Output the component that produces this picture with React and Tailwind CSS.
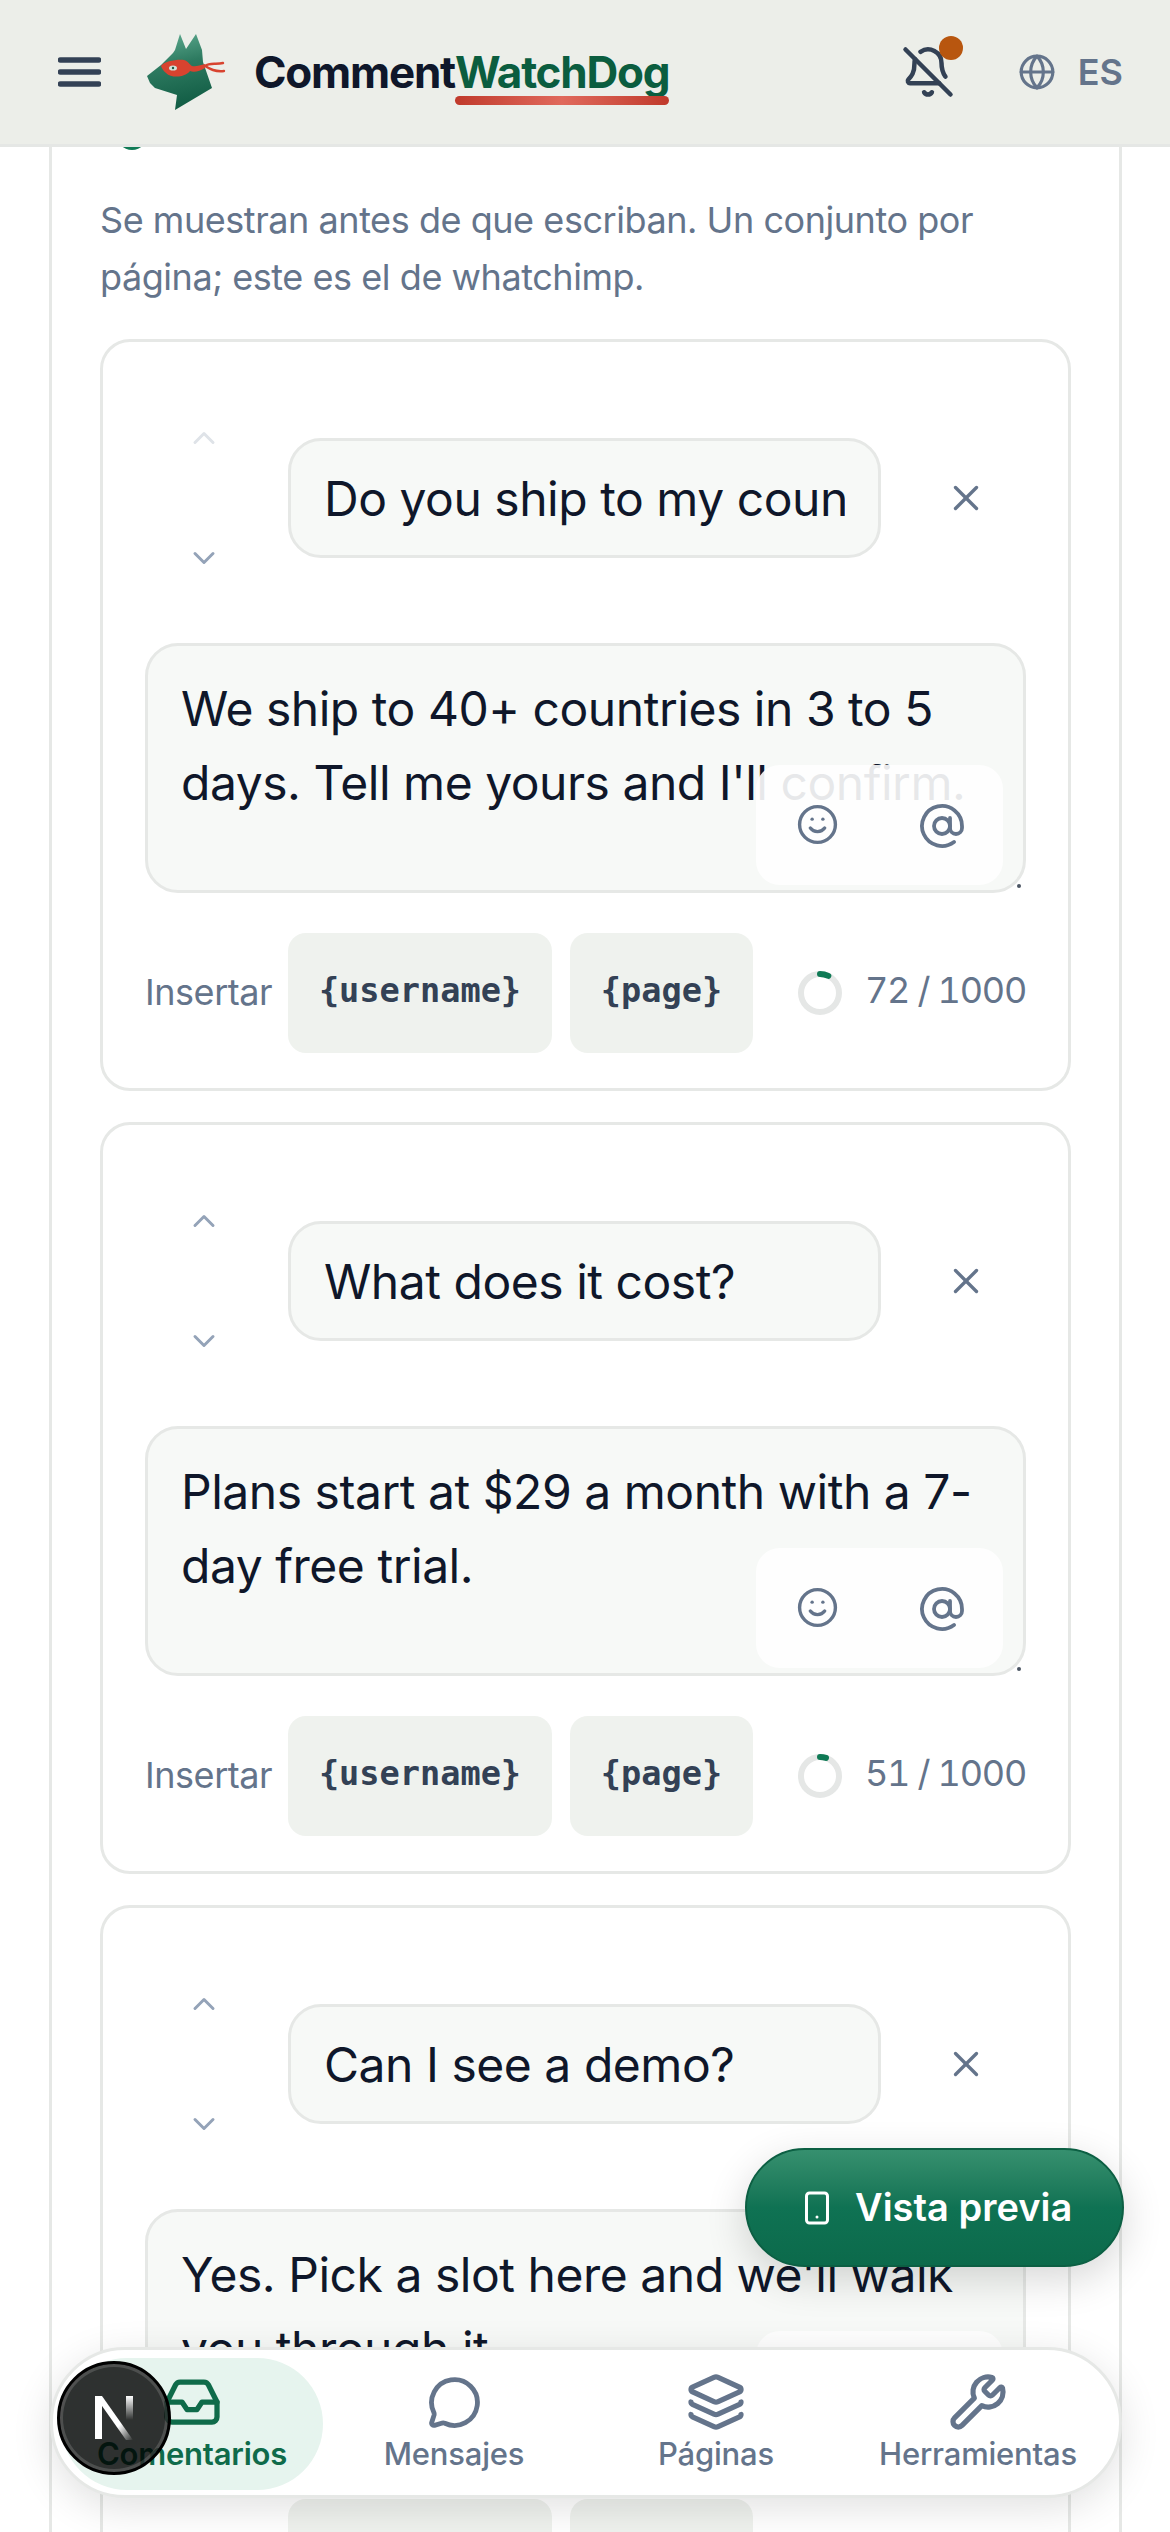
import React from "react";
import { AtSign, BellOff, ChevronDown, ChevronUp, Globe, Inbox, Layers, MessageCircle, Smartphone, Smile, Wrench, X } from "lucide-react";

function Logo() {
  return (
    <svg width="84" height="80" viewBox="16 12 84 80" className="shrink-0">
      <defs>
        <linearGradient id="dog" x1="0.35" y1="0" x2="0.55" y2="1">
          <stop offset="0" stopColor="#5aa78c" />
          <stop offset="0.4" stopColor="#2d7a60" />
          <stop offset="1" stopColor="#0f5a42" />
        </linearGradient>
      </defs>
      <path d="M17 56 L31 45 L43 33 L45 30 L50 14 L56 29 L66 14 L72 30 L73 42 L82 68 L45 90 L47 75 L25 68 L20 63 Z" fill="url(#dog)" />
      <path d="M31 46 C34 41 48 39 54 40 C58 41 60 45 62 46 C66 47 70 45 75 44 L75 48 C70 51 64 53 60 51 C56 57 42 59 36 53 C33 51 32 48 31 46 Z" fill="#d8432f" />
      <ellipse cx="43" cy="48" rx="4" ry="2.6" fill="#cfe3d9" />
      <circle cx="43" cy="48" r="1.2" fill="#1c5a45" />
      <path d="M75 46 C80 42 86 45 93 43 M75 46 C80 49 85 52 94 51" fill="none" stroke="#d8432f" strokeWidth="2.4" strokeLinecap="round" />
    </svg>
  );
}

function Ring({ value }) {
  const c = 2 * Math.PI * 19;
  return (
    <svg width="44" height="44" viewBox="0 0 44 44" className="-rotate-90 shrink-0">
      <circle cx="22" cy="22" r="19" fill="none" stroke="#e5e7e6" strokeWidth="6" />
      <circle cx="22" cy="22" r="19" fill="none" stroke="#0f7a55" strokeWidth="6" strokeLinecap="round" strokeDasharray={`${(value / 1000) * c} ${c}`} />
    </svg>
  );
}

function Card({ question, answer, count, upMuted }) {
  return (
    <div className="rounded-[30px] border-[3px] border-[#e6e8e6] bg-white px-[42px] pt-[78px] pb-[35px]">
      <div className="flex h-[156px] items-center gap-[25px]">
        <div className="flex h-full w-[118px] shrink-0 flex-col items-center justify-between">
          <ChevronUp size={36} strokeWidth={2} className={upMuted ? "text-[#dfe3e8]" : "text-[#94a3b8]"} />
          <ChevronDown size={36} strokeWidth={2} className="text-[#94a3b8]" />
        </div>
        <input
          readOnly
          defaultValue={question}
          className="h-[120px] w-[593px] shrink-0 rounded-[33px] border-[3px] border-[#e6e8e6] bg-[#f7f9f7] px-[33px] text-[48px] tracking-[-0.47px] text-[#0f172a] outline-none"
        />
        <div className="flex w-[120px] shrink-0 items-center justify-center">
          <X size={42} strokeWidth={1.9} className="text-[#64748b]" />
        </div>
      </div>
      <div className="relative mt-[67px] h-[250px]">
        <textarea
          readOnly
          defaultValue={answer}
          className="block h-full w-full resize-none overflow-hidden rounded-[33px] border-[3px] border-[#e6e8e6] bg-[#f7f9f7] px-[33px] pt-[26px] text-[48px] leading-[74px] tracking-[-0.47px] text-[#0f172a] outline-none"
        />
        <div className="absolute right-[23px] bottom-[8px] flex h-[120px] w-[247px] items-start rounded-[24px] bg-white/90 pt-[37px]">
          <div className="flex w-[124px] justify-center">
            <Smile size={43} strokeWidth={1.9} className="mt-[1px] text-[#64748b]" />
          </div>
          <div className="flex w-[124px] justify-center pl-[2px]">
            <AtSign size={48} strokeWidth={1.9} className="text-[#64748b]" />
          </div>
        </div>
        <div className="absolute right-[5px] bottom-[5px] h-[4px] w-[4px] rounded-full bg-[#4b5563]" />
      </div>
      <div className="mt-[40px] flex h-[120px] items-center">
        <span className="w-[143px] shrink-0 pb-[2px] text-[36px] tracking-[-0.45px] text-[#64748b]">Insertar</span>
        <div className="flex gap-[18px] font-['DejaVu_Sans_Mono',monospace] text-[33.6px] font-bold text-[#334155]">
          <span className="flex h-[120px] w-[264px] items-center justify-center rounded-[18px] bg-[#eff2ee] pb-[3px]">{"{username}"}</span>
          <span className="flex h-[120px] w-[183px] items-center justify-center rounded-[18px] bg-[#eff2ee] pb-[3px]">{"{page}"}</span>
        </div>
        <div className="ml-auto flex items-center gap-[23px]">
          <Ring value={count} />
          <span className="pb-[6px] text-[36px] tracking-[-1.25px] whitespace-nowrap text-[#64748b] tabular-nums">{count} / 1000</span>
        </div>
      </div>
    </div>
  );
}

function Tab({ icon: Icon, label, active, size = 60 }) {
  return (
    <div className={`flex h-[132px] flex-col items-center justify-start rounded-[66px] pt-[14px] ${active ? "bg-[#e6f4ee] text-[#0f6b4a]" : "text-[#64748b]"}`}>
      <span className="flex h-[60px] items-center justify-center">
        <Icon size={size} strokeWidth={2.1} />
      </span>
      <span className={`mt-[2px] text-[31px] leading-[40px] tracking-[-0.2px] whitespace-nowrap ${active ? "font-semibold" : "font-medium"}`}>{label}</span>
    </div>
  );
}

export default function App() {
  return (
    <div className="relative h-[2532px] w-[1170px] overflow-hidden bg-white font-['Inter',sans-serif]">
      <header className="relative z-10 flex h-[147px] items-center border-b-[3px] border-[#e5e7e5] bg-[#eceee9] pr-[47px] pl-[58px]">
        <svg width="43" height="30" viewBox="0 0 43 30" className="shrink-0 text-[#334155]">
          <path d="M2.5 3 H40.5 M2.5 15 H40.5 M2.5 27 H40.5" stroke="currentColor" strokeWidth="5.5" strokeLinecap="round" fill="none" />
        </svg>
        <div className="ml-[45px] flex items-center">
          <Logo />
          <div className="relative ml-[24px] flex text-[44px] leading-[52px] font-bold tracking-[-0.028em]">
            <span className="text-[#0f172a]">Comment</span>
            <span className="relative text-[#0b5d3f]">
              WatchDog
              <span className="absolute top-[50px] right-0 left-0 h-[9px] rounded-full bg-gradient-to-r from-[#c0392b] via-[#e0695c] to-[#c0392b]" />
            </span>
          </div>
        </div>
        <div className="relative ml-auto">
          <BellOff size={54} strokeWidth={2} className="text-[#334155]" />
          <span className="absolute -top-[9px] -right-[8px] h-[24px] w-[24px] rounded-full bg-[#b8560f]" />
        </div>
        <div className="ml-[63px] flex items-center gap-[22px] text-[36px] font-semibold text-[#64748b]">
          <Globe size={38} strokeWidth={2} />
          <span>ES</span>
        </div>
      </header>

      <main className="pr-[48px] pl-[49px]">
        <section className="-mt-[29px] border-x-[3px] border-[#e6e8e6] bg-white px-[48px]">
          <div className="ml-[16px] h-[32px] w-[32px] rounded-full bg-[#0f7a55]" />
          <p className="mt-[42px] mb-[33px] text-[36px] leading-[57px] tracking-[-0.45px] text-[#64748b]">
            Se muestran antes de que escriban. Un conjunto por página; este es el de whatchimp.
          </p>
          <div className="flex flex-col gap-[31px]">
            <Card question="Do you ship to my country?" answer="We ship to 40+ countries in 3 to 5 days. Tell me yours and I'll confirm." count={72} upMuted />
            <Card question="What does it cost?" answer="Plans start at $29 a month with a 7-day free trial." count={51} />
            <Card question="Can I see a demo?" answer="Yes. Pick a slot here and we'll walk you through it." count={52} />
          </div>
        </section>
      </main>

      <button className="absolute top-[2148px] left-[745px] flex h-[119px] w-[379px] items-center justify-start gap-[20px] rounded-full border-[2px] border-[#0c5f43] bg-gradient-to-b from-[#36906f] via-[#0f7253] to-[#0c6a4b] pl-[52px] text-[38px] font-semibold text-white shadow-[0_12px_40px_rgba(0,0,0,0.16)]">
        <Smartphone size={36} strokeWidth={2} />
        <span>Vista previa</span>
      </button>

      <nav className="absolute top-[2347px] left-[50px] grid h-[151px] w-[1072px] grid-cols-[repeat(4,262px)] rounded-[75px] border-[3px] border-[#e6e8e6] bg-white px-[8px] py-[8px] shadow-[0_10px_40px_rgba(0,0,0,0.12)]">
        <Tab icon={Inbox} label="Comentarios" active />
        <Tab icon={MessageCircle} label="Mensajes" size={55} />
        <Tab icon={Layers} label="Páginas" />
        <Tab icon={Wrench} label="Herramientas" />
      </nav>

      <div className="absolute top-[2361px] left-[57px] flex h-[114px] w-[114px] items-center justify-center rounded-full border-[3px] border-black bg-black/80 shadow-[inset_0_0_0_3px_rgba(255,255,255,0.15)]">
        <svg width="38" height="44" viewBox="0 0 38 44">
          <defs>
            <linearGradient id="nr" x1="0" y1="0" x2="0" y2="1">
              <stop offset="0" stopColor="#fff" />
              <stop offset="0.8" stopColor="#fff" stopOpacity="0" />
            </linearGradient>
            <linearGradient id="nd" x1="0.3" y1="0.3" x2="1" y2="1">
              <stop offset="0.5" stopColor="#fff" />
              <stop offset="1" stopColor="#fff" stopOpacity="0" />
            </linearGradient>
          </defs>
          <path d="M0 0 H7 V43 H0 Z" fill="#fff" />
          <path d="M31 0 H38 V30 H31 Z" fill="url(#nr)" />
          <path d="M0 0 H7 L38 44 H31 Z" fill="url(#nd)" />
        </svg>
      </div>
    </div>
  );
}
